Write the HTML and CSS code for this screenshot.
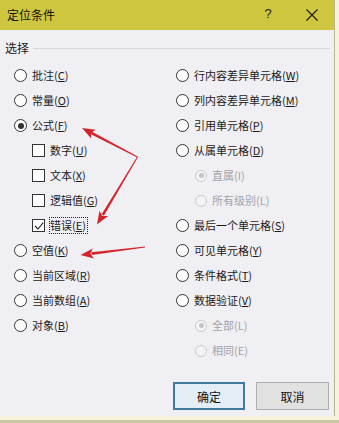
FILE: index.html
```html
<!DOCTYPE html>
<html lang="zh-CN">
<head>
<meta charset="utf-8">
<title>定位条件</title>
<link rel="stylesheet" href="styles.css">
</head>
<body>
<div class="dialog">
  <div class="titlebar">
    <span class="title">定位条件</span>
    <span class="help">?</span>
    <span class="close"><svg width="12" height="12" viewBox="0 0 12 12"><path d="M0.5 0.5 L11.5 11.5 M11.5 0.5 L0.5 11.5" stroke="#1a1a1a" stroke-width="1.1" fill="none"/></svg></span>
  </div>
  <div class="body">
    <div class="group-label"><span>选择</span><div class="rule"></div></div>
    <div class="columns">
      <div class="col left">
        <div class="row"><span class="radio"></span><span class="lbl">批注(<u>C</u>)</span></div>
        <div class="row"><span class="radio"></span><span class="lbl">常量(<u>O</u>)</span></div>
        <div class="row"><span class="radio checked"></span><span class="lbl">公式(<u>F</u>)</span></div>
        <div class="row sub"><span class="check"></span><span class="lbl">数字(<u>U</u>)</span></div>
        <div class="row sub"><span class="check"></span><span class="lbl">文本(<u>X</u>)</span></div>
        <div class="row sub"><span class="check"></span><span class="lbl">逻辑值(<u>G</u>)</span></div>
        <div class="row sub"><span class="check"><svg width="10" height="10" viewBox="0 0 10 10"><path d="M1 5 L4 8 L9.2 1.6" stroke="#222" stroke-width="1.1" fill="none"/></svg></span><span class="lbl focus">错误(<u>E</u>)</span></div>
        <div class="row"><span class="radio"></span><span class="lbl">空值(<u>K</u>)</span></div>
        <div class="row"><span class="radio"></span><span class="lbl">当前区域(<u>R</u>)</span></div>
        <div class="row"><span class="radio"></span><span class="lbl">当前数组(<u>A</u>)</span></div>
        <div class="row"><span class="radio"></span><span class="lbl">对象(<u>B</u>)</span></div>
      </div>
      <div class="col right">
        <div class="row"><span class="radio"></span><span class="lbl">行内容差异单元格(<u>W</u>)</span></div>
        <div class="row"><span class="radio"></span><span class="lbl">列内容差异单元格(<u>M</u>)</span></div>
        <div class="row"><span class="radio"></span><span class="lbl">引用单元格(<u>P</u>)</span></div>
        <div class="row"><span class="radio"></span><span class="lbl">从属单元格(<u>D</u>)</span></div>
        <div class="row sub disabled"><span class="radio small checked"></span><span class="lbl">直属(I)</span></div>
        <div class="row sub disabled"><span class="radio small"></span><span class="lbl">所有级别(L)</span></div>
        <div class="row"><span class="radio"></span><span class="lbl">最后一个单元格(<u>S</u>)</span></div>
        <div class="row"><span class="radio"></span><span class="lbl">可见单元格(<u>Y</u>)</span></div>
        <div class="row"><span class="radio"></span><span class="lbl">条件格式(<u>T</u>)</span></div>
        <div class="row"><span class="radio"></span><span class="lbl">数据验证(<u>V</u>)</span></div>
        <div class="row sub disabled"><span class="radio small checked"></span><span class="lbl">全部(L)</span></div>
        <div class="row sub disabled"><span class="radio small"></span><span class="lbl">相同(E)</span></div>
      </div>
    </div>
    <div class="buttons">
      <button class="btn primary">确定</button>
      <button class="btn">取消</button>
    </div>
  </div>
  <svg class="arrows" width="334" height="416" viewBox="0 0 334 416">
    <g fill="#d2252b" stroke="none">
      <path d="M137.7 156.6 L91.6 131.5 L90.4 133.9 L137.3 157.4 Z"/>
      <path d="M82 128 L95.8 129.7 L90.9 132.7 L91.2 138.5 Z"/>
      <path d="M137.9 157.3 L103.9 215.7 L101.7 214.3 L137.1 156.7 Z"/>
      <path d="M97 224.5 L99.5 210.8 L102.2 216 L108.1 216 Z"/>
      <path d="M145.1 247.5 L91.7 254.9 L91.3 252.3 L144.9 246.5 Z"/>
      <path d="M80.5 255 L92.8 248.4 L90.4 253.8 L94 258.4 Z"/>
    </g>
  </svg>
</div>
<div class="taskbar"></div>
</body>
</html>
```

FILE: styles.css
```css
html, body {
  margin: 0;
  padding: 0;
}
body {
  background: #f7f2de;
  width: 339px;
  height: 423px;
  overflow: hidden;
  font-family: "Noto Sans CJK SC", "Noto Sans", sans-serif;
  color: #1a1a1a;
}
.dialog {
  position: relative;
  width: 334px;
  height: 416px;
  border-right: 1px solid #b9b78e;
  background: #f0eff3;
}
.titlebar {
  height: 30px;
  background: #cec63e;
  display: flex;
  align-items: center;
}
.title {
  font-size: 12px;
  line-height: 16px;
  padding-left: 7px;
  color: #111;
}
.help {
  margin-left: auto;
  width: 20px;
  text-align: center;
  font-family: "Liberation Sans", sans-serif;
  font-size: 13px;
  line-height: 16px;
  margin-top: -3px;
  color: #222;
}
.close {
  width: 44px;
  margin-left: 12px;
  display: flex;
  justify-content: center;
  align-items: center;
}
.body {
  display: flex;
  flex-direction: column;
}
.group-label {
  display: flex;
  align-items: center;
  margin-top: 10px;
  height: 16px;
  padding: 0 4px 0 5px;
  font-size: 12px;
  line-height: 16px;
}
.rule {
  flex: 1;
  height: 1px;
  background: #d8d7db;
  margin-left: 4px;
}
.columns {
  display: grid;
  grid-template-columns: 176px 1fr;
  margin-top: 7px;
}
.col.left {
  padding-left: 14px;
}
.row {
  height: 25px;
  display: flex;
  align-items: center;
  font-size: 11px;
  line-height: 15px;
}
.col.left .row.sub {
  padding-left: 18px;
}
.col.right .row.sub {
  padding-left: 19px;
}
.radio {
  width: 11px;
  height: 11px;
  border: 1px solid #333;
  border-radius: 50%;
  background: #fff;
  margin-right: 5px;
  display: flex;
  justify-content: center;
  align-items: center;
  flex: none;
}
.radio.checked::after {
  content: "";
  width: 6px;
  height: 6px;
  border-radius: 50%;
  background: #333;
}
.radio.small {
  width: 10px;
  height: 10px;
}
.disabled .radio {
  border-color: #c9c9cc;
  background: #f4f4f6;
}
.disabled .radio.checked::after {
  width: 5px;
  height: 5px;
  background: #c4c4c6;
}
.disabled .lbl {
  color: #a3a3a6;
}
.check {
  width: 11px;
  height: 11px;
  border: 1px solid #333;
  background: #fff;
  margin-right: 5px;
  display: flex;
  justify-content: center;
  align-items: center;
  flex: none;
}
.lbl u {
  text-decoration-thickness: 1px;
  text-underline-offset: 1px;
}
.lbl.focus {
  border: 1px dotted #222;
  margin-left: -1px;
  padding: 0 1px 0 0;
  line-height: 15px;
}
.buttons {
  display: flex;
  justify-content: flex-end;
  gap: 11px;
  padding-right: 5px;
  margin-top: 19px;
}
.btn {
  height: 28px;
  font-family: "Noto Sans CJK SC", sans-serif;
  font-size: 12px;
  color: #111;
  padding: 0;
  margin: 0;
}
.btn.primary {
  width: 72px;
  border: 2px solid #3f7a9c;
  background: #e3eef7;
}
.btn:not(.primary) {
  width: 73px;
  border: 1px solid #adadad;
  background: #e1e1e1;
}
.arrows {
  position: absolute;
  left: 0;
  top: 0;
  pointer-events: none;
}
.taskbar {
  margin-top: 4px;
  height: 3px;
  background: #c9c6a4;
}
```
